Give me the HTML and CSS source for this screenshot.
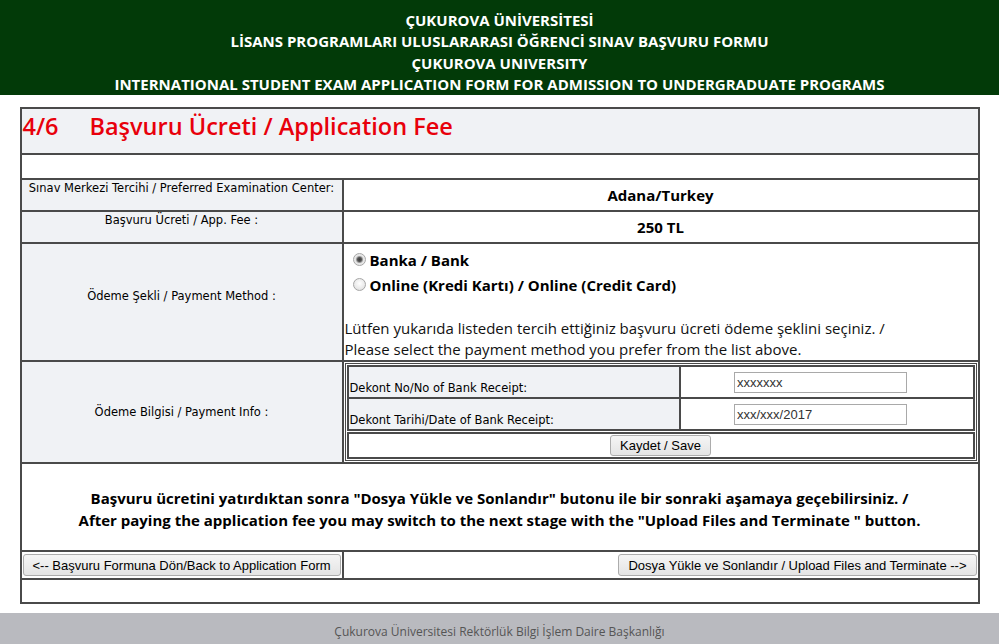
FILE: index.html
```html
<!DOCTYPE html>
<html lang="tr">
<head>
<meta charset="utf-8">
<title>Başvuru Ücreti / Application Fee</title>
<link rel="stylesheet" href="styles.css">
</head>
<body>
<header class="site-header">
  <div>ÇUKUROVA ÜNİVERSİTESİ</div>
  <div>LİSANS PROGRAMLARI ULUSLARARASI ÖĞRENCİ SINAV BAŞVURU FORMU</div>
  <div>ÇUKUROVA UNIVERSITY</div>
  <div>INTERNATIONAL STUDENT EXAM APPLICATION FORM FOR ADMISSION TO UNDERGRADUATE PROGRAMS</div>
</header>
<main class="page">
  <table class="form">
    <colgroup><col class="col-label"><col class="col-value"></colgroup>
    <tbody>
      <tr>
        <td colspan="2" class="title-cell"><h1 class="title"><span class="step">4/6</span>Başvuru Ücreti / Application Fee</h1></td>
      </tr>
      <tr><td colspan="2" class="empty-cell"></td></tr>
      <tr>
        <td class="label label-top h-32">Sınav Merkezi Tercihi / Preferred Examination Center:</td>
        <td class="value">Adana/Turkey</td>
      </tr>
      <tr>
        <td class="label label-top h-32">Başvuru Ücreti / App. Fee :</td>
        <td class="value">250 TL</td>
      </tr>
      <tr>
        <td class="label label-mid method-label">Ödeme Şekli / Payment Method :</td>
        <td class="method-cell">
          <div class="radio-list">
            <label class="radio-row"><input type="radio" name="odeme" checked><span>Banka / Bank</span></label>
            <label class="radio-row"><input type="radio" name="odeme"><span>Online (Kredi Kartı) / Online (Credit Card)</span></label>
          </div>
          <p class="hint">Lütfen yukarıda listeden tercih ettiğiniz başvuru ücreti ödeme şeklini seçiniz. /<br>Please select the payment method you prefer from the list above.</p>
        </td>
      </tr>
      <tr>
        <td class="label label-mid h-102">Ödeme Bilgisi / Payment Info :</td>
        <td class="info-cell">
          <div class="info-box">
            <table class="info-table">
              <colgroup><col class="info-col-label"><col></colgroup>
              <tbody>
                <tr>
                  <td class="info-label">Dekont No/No of Bank Receipt:</td>
                  <td class="info-input"><input type="text" class="field" value="xxxxxxx"></td>
                </tr>
                <tr>
                  <td class="info-label">Dekont Tarihi/Date of Bank Receipt:</td>
                  <td class="info-input"><input type="text" class="field" value="xxx/xxx/2017"></td>
                </tr>
              </tbody>
            </table>
            <table class="save-table">
              <tbody><tr><td class="save-cell"><button type="button" class="btn btn-save">Kaydet / Save</button></td></tr></tbody>
            </table>
          </div>
        </td>
      </tr>
      <tr>
        <td colspan="2" class="notice">Başvuru ücretini yatırdıktan sonra "Dosya Yükle ve Sonlandır" butonu ile bir sonraki aşamaya geçebilirsiniz. /<br>After paying the application fee you may switch to the next stage with the "Upload Files and Terminate " button.</td>
      </tr>
      <tr>
        <td class="nav-cell"><button type="button" class="btn">&lt;-- Başvuru Formuna Dön/Back to Application Form</button></td>
        <td class="nav-cell nav-right"><button type="button" class="btn">Dosya Yükle ve Sonlandır / Upload Files and Terminate --&gt;</button></td>
      </tr>
      <tr><td colspan="2" class="empty-cell last"></td></tr>
    </tbody>
  </table>
</main>
<footer class="site-footer">Çukurova Üniversitesi Rektörlük Bilgi İşlem Daire Başkanlığı</footer>
</body>
</html>
```
FILE: styles.css
```css
html, body {
  margin: 0;
  padding: 0;
  background: #ffffff;
}

body {
  font-family: "Open Sans", "Noto Sans", sans-serif;
  color: #000;
  height: 644px;
  overflow: hidden;
}

.site-header {
  background: #023a08;
  color: #fff;
  font-weight: 700;
  font-size: 15px;
  line-height: 21.3px;
  text-align: center;
  height: 95px;
  box-sizing: border-box;
  padding-top: 10px;
}

.page {
  padding-top: 12px;
  padding-bottom: 9px;
}

.form {
  width: 960px;
  margin: 0 auto;
  border: 1px solid #4a4a4a;
  border-spacing: 0;
  table-layout: fixed;
}

.col-label { width: 322px; }

:where(.form > tbody > tr > td) {
  border: 1px solid #4a4a4a;
  padding: 1px;
  box-sizing: border-box;
}

.title-cell {
  height: 46px;
  background: #f0f2f5;
  vertical-align: top;
}

.title {
  margin: 0;
  padding-top: 1px;
  color: #e8000b;
  font-size: 23.5px;
  font-weight: 600;
  line-height: 30px;
}

.step {
  display: inline-block;
  width: 67px;
}

.empty-cell { height: 25px; }
.empty-cell.last { height: 24px; }

.label {
  background: #f0f2f5;
  text-align: center;
  font-family: "DejaVu Sans", Verdana, sans-serif;
  font-size: 11.5px;
  line-height: 14px;
  color: #000;
}

.label-top { vertical-align: top; }
.label-mid { vertical-align: middle; }

.h-32 { height: 32px; }
.h-102 { height: 102px; }

.value {
  text-align: center;
  font-weight: 700;
  font-size: 15px;
  vertical-align: middle;
}

.method-label {
  height: 118px;
  padding-bottom: 14px;
}

.method-cell {
  vertical-align: top;
  font-size: 15px;
  padding-bottom: 0;
}

.radio-list {
  display: flex;
  flex-direction: column;
  padding-top: 2px;
}

.radio-row {
  display: flex;
  align-items: center;
  height: 25px;
  font-weight: 700;
  padding-left: 8px;
}

.radio-row input {
  appearance: none;
  -webkit-appearance: none;
  width: 13px;
  height: 13px;
  margin: 0 4px 0 0;
  border: 1px solid #a6a6a6;
  border-radius: 50%;
  background: radial-gradient(circle at 50% 40%, #ffffff 0%, #e9e9e9 60%, #d6d6d6 100%);
  box-sizing: border-box;
}

.radio-row input:checked {
  background: radial-gradient(circle at 50% 50%, #3c3c3c 0, #555 2px, #9a9a9a 3px, #e4e4e4 4px, #f4f4f4 100%);
}

.hint {
  margin: 21px 0 0;
  line-height: 21px;
  font-weight: 400;
  color: #111;
}

.info-cell { vertical-align: top; }

.info-box {
  border: 1px solid #4a4a4a;
  padding: 1px;
}

.info-table, .save-table {
  width: 100%;
  border: 1px solid #4a4a4a;
  border-spacing: 0;
  table-layout: fixed;
}

.info-col-label { width: 332px; }

.info-table td, .save-table td {
  border: 1px solid #4a4a4a;
  padding: 1px;
  height: 32px;
  box-sizing: border-box;
}

.info-table td.info-label {
  background: #f0f2f5;
  font-family: "DejaVu Sans", Verdana, sans-serif;
  font-size: 11.5px;
  line-height: 14px;
  vertical-align: bottom;
  padding-bottom: 2px;
}

.info-input {
  text-align: center;
  vertical-align: middle;
  line-height: 0;
}

.field {
  width: 173px;
  height: 21px;
  box-sizing: border-box;
  border: 1px solid #a9a9a9;
  padding: 0 2px;
  font-family: "Liberation Sans", Arial, sans-serif;
  font-size: 13px;
  line-height: normal;
  color: #333;
  margin: 0 0 0 -12px;
  vertical-align: middle;
}

.save-table { margin-top: 1px; }

.save-table td.save-cell {
  height: 25px;
  text-align: center;
  vertical-align: middle;
  line-height: 0;
}

.btn {
  font-family: "Liberation Sans", Arial, sans-serif;
  font-size: 13px;
  line-height: normal;
  color: #000;
  height: 22px;
  padding: 0 9px;
  border: 1px solid #acacac;
  border-radius: 3px;
  background: linear-gradient(#f5f5f5, #e4e4e4);
  margin: 0;
  white-space: nowrap;
  vertical-align: middle;
}

.btn-save { height: 21px; }

.notice {
  height: 88px;
  text-align: center;
  font-weight: 700;
  font-size: 15px;
  line-height: 22px;
  vertical-align: middle;
  padding-top: 4px;
}

.nav-cell {
  height: 28px;
  vertical-align: middle;
  line-height: 0;
}

.nav-right { text-align: right; }

.site-footer {
  background: #b9babf;
  color: #555;
  text-align: center;
  font-size: 12px;
  line-height: 18px;
  height: 32px;
  box-sizing: border-box;
  padding-top: 10px;
}
```
